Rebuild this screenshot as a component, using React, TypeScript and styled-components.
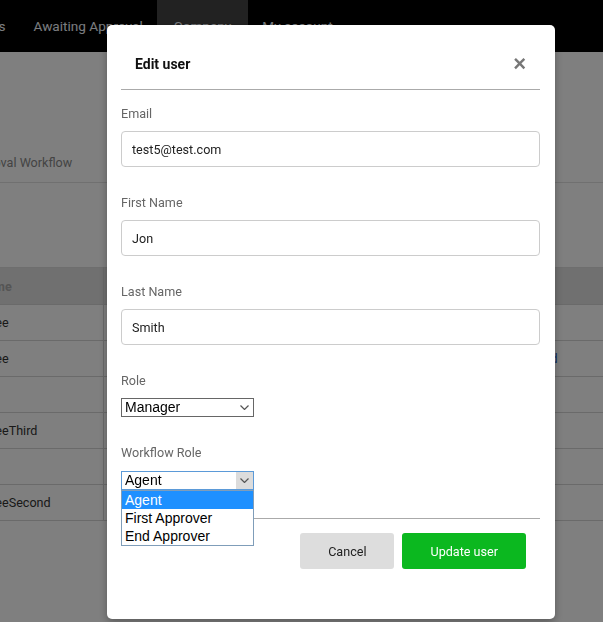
import React from "react";
import styled, { createGlobalStyle } from "styled-components";

const GlobalStyle = createGlobalStyle`
  html, body {
    margin: 0;
    padding: 0;
    background: #fff;
    overflow: hidden;
  }
  body {
    font-family: Roboto, "Liberation Sans", Arial, sans-serif;
  }
`;

interface Row {
  name: string;
  email: string;
  role: string;
  status: string;
}

const rows: Row[] = [
  { name: "Employee", email: "test1@test.com", role: "Manager", status: "" },
  { name: "Employee", email: "test2@test.com", role: "Employee", status: "Assigned" },
  { name: "", email: "test3@test.com", role: "Employee", status: "" },
  { name: "EmployeeThird", email: "test4@test.com", role: "Employee", status: "" },
  { name: "", email: "test5@test.com", role: "Manager", status: "" },
  { name: "EmployeeSecond", email: "test6@test.com", role: "Employee", status: "" },
];

const workflowOptions = ["Agent", "First Approver", "End Approver"];

const ChevronIcon = () => (
  <svg width="9" height="5" viewBox="0 0 9 5">
    <polyline points="0.5,0.5 4.5,4.5 8.5,0.5" fill="none" stroke="#555" strokeWidth="1.2" />
  </svg>
);

const App: React.FC = () => {
  return (
    <Page>
      <GlobalStyle />
      <NavBar>
        <NavList>
          <NavItem>Requests</NavItem>
          <NavItem>Awaiting Approval</NavItem>
          <NavItem $active>Company</NavItem>
          <NavItem>My account</NavItem>
        </NavList>
      </NavBar>

      <Content>
        <TabBar>
          <Tab>Approval Workflow</Tab>
        </TabBar>
        <Table>
          <colgroup>
            <col style={{ width: 161 }} />
            <col style={{ width: 200 }} />
            <col style={{ width: 190 }} />
            <col style={{ width: 200 }} />
          </colgroup>
          <thead>
            <tr>
              <Th>Username</Th>
              <Th>Email</Th>
              <Th>Role</Th>
              <Th>Status</Th>
            </tr>
          </thead>
          <tbody>
            {rows.map((r, i) => (
              <tr key={i}>
                <Td>{r.name}</Td>
                <Td>{r.email}</Td>
                <Td>{r.role}</Td>
                <Td $link>{r.status}</Td>
              </tr>
            ))}
          </tbody>
        </Table>
      </Content>

      <Overlay>
        <Modal>
          <ModalHeader>
            <Title>Edit user</Title>
            <CloseButton aria-label="Close">×</CloseButton>
          </ModalHeader>

          <ModalBody>
            <Field>
              <Label>Email</Label>
              <TextInput defaultValue="test5@test.com" />
            </Field>
            <Field>
              <Label>First Name</Label>
              <TextInput defaultValue="Jon" />
            </Field>
            <Field>
              <Label>Last Name</Label>
              <TextInput defaultValue="Smith" />
            </Field>
            <Field>
              <Label>Role</Label>
              <SelectWrap>
                <NativeSelect defaultValue="Manager">
                  <option>Manager</option>
                  <option>Employee</option>
                </NativeSelect>
                <Arrow>
                  <ChevronIcon />
                </Arrow>
              </SelectWrap>
            </Field>
            <Field>
              <Label $select>Workflow Role</Label>
              <SelectWrap $open>
                <NativeSelect defaultValue="Agent">
                  {workflowOptions.map((o) => (
                    <option key={o}>{o}</option>
                  ))}
                </NativeSelect>
                <Arrow $open>
                  <ChevronIcon />
                </Arrow>
                <Listbox>
                  {workflowOptions.map((o) => (
                    <ListOption key={o} $selected={o === "Agent"}>
                      {o}
                    </ListOption>
                  ))}
                </Listbox>
              </SelectWrap>
            </Field>
          </ModalBody>

          <ModalFooter>
            <Button>Cancel</Button>
            <Button $primary>Update user</Button>
          </ModalFooter>
        </Modal>
      </Overlay>
    </Page>
  );
};

export default App;

/* Styled */

const Page = styled.div`
  position: relative;
  width: 603px;
  height: 622px;
  overflow: hidden;
  background: #fff;
`;

const NavBar = styled.nav`
  height: 52px;
  background: #000;
  display: flex;
  overflow: hidden;
`;

const NavList = styled.ul`
  display: flex;
  margin: 0 0 0 -65px;
  padding: 0;
  list-style: none;
`;

const NavItem = styled.li<{ $active?: boolean }>`
  padding: 0 ${(p) => (p.$active ? "17px" : "14px")};
  line-height: 52px;
  font-size: 13.6px;
  color: #f4f9ff;
  white-space: nowrap;
  background: ${(p) => (p.$active ? "#444" : "transparent")};
`;

const Content = styled.main`
  margin-left: -58px;
  padding-top: 92px;
`;

const TabBar = styled.div`
  display: flex;
  height: 38px;
  border-bottom: 1px solid #e0e0e0;
`;

const Tab = styled.div`
  padding: 0 25px;
  line-height: 38px;
  font-size: 12.6px;
  color: #888;
  white-space: nowrap;
`;

const Table = styled.table`
  margin-top: 84px;
  border-collapse: collapse;
  table-layout: fixed;
  width: 751px;
  font-size: 12.6px;
`;

const Th = styled.th`
  height: 36px;
  padding: 0 12px;
  text-align: left;
  font-weight: 700;
  color: #aaa;
  background: #e0e0e0;
  border-top: 1px solid #dcdcdc;
  border-bottom: 1px solid #d4d4d4;
  border-right: 1px solid #d4d4d4;
  white-space: nowrap;
  overflow: hidden;
`;

const Td = styled.td<{ $link?: boolean }>`
  height: 35px;
  padding: 0 12px;
  color: ${(p) => (p.$link ? "#1f5fbf" : "#333")};
  border-bottom: 1px solid #d4d4d4;
  border-right: 1px solid #d4d4d4;
  white-space: nowrap;
  overflow: hidden;
`;

const Overlay = styled.div`
  position: fixed;
  inset: 0;
  background: rgba(0, 0, 0, 0.5);
  display: flex;
  align-items: flex-start;
  z-index: 10;
`;

const Modal = styled.div`
  margin: 25px 0 0 107px;
  width: 448px;
  background: #fff;
  border-radius: 5px;
  box-shadow: 0 3px 9px rgba(0, 0, 0, 0.3);
`;

const ModalHeader = styled.div`
  display: flex;
  align-items: center;
  justify-content: space-between;
  margin: 0 15px 0 14px;
  padding: 30px 14px 16px 14px;
  border-bottom: 1px solid #aaa;
`;

const Title = styled.h4`
  margin: 0;
  font-size: 14px;
  line-height: 18px;
  font-weight: 700;
  color: #111;
`;

const CloseButton = styled.button`
  border: none;
  background: none;
  padding: 0;
  margin: 0;
  font-family: "Liberation Sans", Arial, sans-serif;
  font-size: 22px;
  line-height: 18px;
  font-weight: 700;
  color: #777;
  cursor: pointer;
`;

const ModalBody = styled.div`
  margin: 0 15px 0 14px;
  padding: 16px 0 0;
`;

const Field = styled.div`
  display: flex;
  flex-direction: column;
  align-items: flex-start;
  margin-bottom: 28px;
`;

const Label = styled.label<{ $select?: boolean }>`
  font-size: 12.6px;
  line-height: 16px;
  color: #666;
  margin-bottom: ${(p) => (p.$select ? "10px" : "9px")};
`;

const TextInput = styled.input`
  box-sizing: border-box;
  width: 100%;
  height: 36px;
  padding: 0 10px;
  border: 1px solid #ccc;
  border-radius: 4px;
  font-family: Roboto, "Liberation Sans", Arial, sans-serif;
  font-size: 12.6px;
  color: #222;
  outline: none;
`;

const SelectWrap = styled.div<{ $open?: boolean }>`
  position: relative;
  box-sizing: border-box;
  width: 133px;
  height: 19px;
  border: 1px solid ${(p) => (p.$open ? "#5b9ad8" : "#666")};
  background: #fff;
`;

const NativeSelect = styled.select`
  appearance: none;
  -webkit-appearance: none;
  display: block;
  width: 100%;
  height: 100%;
  margin: 0;
  padding: 0 0 0 3px;
  border: 0;
  border-radius: 0;
  outline: none;
  background: transparent;
  font-family: "Liberation Sans", Arial, sans-serif;
  font-size: 14px;
  line-height: 17px;
  color: #000;
`;

const Arrow = styled.span<{ $open?: boolean }>`
  position: absolute;
  top: 0;
  right: 0;
  bottom: 0;
  width: 17px;
  display: flex;
  align-items: center;
  justify-content: center;
  background: ${(p) => (p.$open ? "#dcdcdc" : "transparent")};
  pointer-events: none;
`;

const Listbox = styled.ul`
  position: absolute;
  top: calc(100% + 1px);
  left: -1px;
  box-sizing: border-box;
  width: 133px;
  margin: 0;
  padding: 0;
  list-style: none;
  border: 1px solid #7f9db9;
  background: #fff;
  z-index: 3;
`;

const ListOption = styled.li<{ $selected?: boolean }>`
  height: 18px;
  line-height: 18px;
  padding-left: 3px;
  font-family: "Liberation Sans", Arial, sans-serif;
  font-size: 14px;
  color: ${(p) => (p.$selected ? "#fff" : "#000")};
  background: ${(p) => (p.$selected ? "#1e90ff" : "#fff")};
  white-space: nowrap;
`;

const ModalFooter = styled.div`
  display: flex;
  justify-content: flex-end;
  gap: 8px;
  margin: 0 15px 0 14px;
  padding: 14px 14px 50px;
  border-top: 1px solid #aaa;
`;

const Button = styled.button<{ $primary?: boolean }>`
  height: 36px;
  padding: 0 28px;
  border: none;
  border-radius: 3px;
  font-family: Roboto, "Liberation Sans", Arial, sans-serif;
  font-size: 12.6px;
  color: ${(p) => (p.$primary ? "#fff" : "#222")};
  background: ${(p) => (p.$primary ? "#0bb81f" : "#ddd")};
  cursor: pointer;
`;
